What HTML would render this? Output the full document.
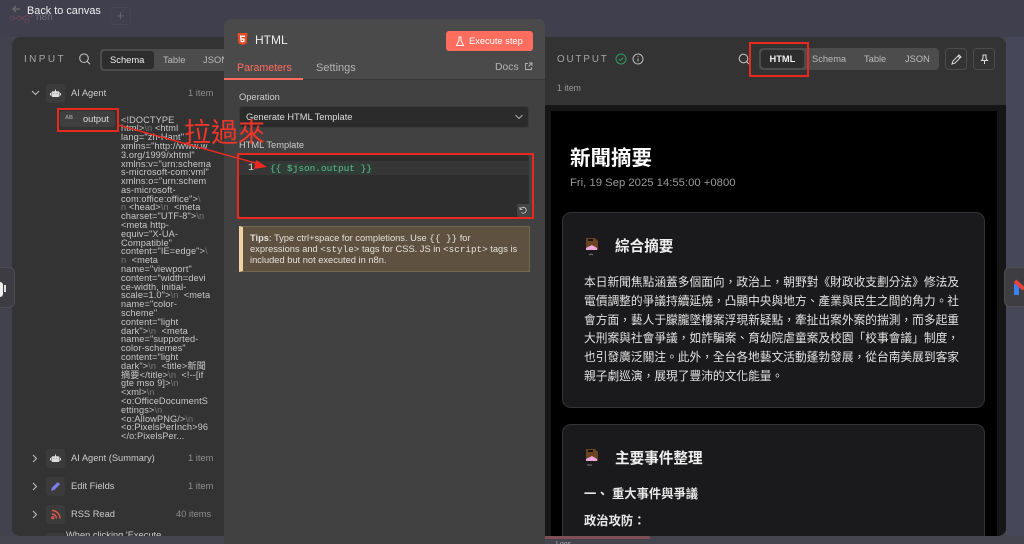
<!DOCTYPE html>
<html lang="zh-Hant">
<head>
<meta charset="utf-8">
<title>HTML node</title>
<style>
html,body{margin:0;padding:0;width:1024px;height:544px;overflow:hidden;background:#44444f;}
body{position:relative;font-family:"Liberation Sans","Noto Sans CJK TC",sans-serif;color:#ddd;}
.a{position:absolute;white-space:nowrap;}
.mono{font-family:"Liberation Mono","Noto Sans CJK TC",monospace;}
.l{position:absolute;left:121px;font-size:9.2px;letter-spacing:.12px;line-height:9px;color:#c9c9c9;white-space:nowrap;}
.l i{font-style:normal;color:#7a7a7a;}
.box{position:absolute;background:#3b3b3b;border-radius:3px;}
.red{position:absolute;border:2px solid #e8291f;box-sizing:border-box;}
.p{position:absolute;left:584px;font-size:11.72px;line-height:18px;color:#e2e2e2;white-space:nowrap;}
</style>
</head>
<body>
<!-- canvas top -->
<div class="a" style="left:0;top:0;width:1024px;height:37px;background:#3f3f4d;"></div>
<div class="a" style="left:1006px;top:37px;width:18px;height:507px;background:#47475a;"></div>
<div class="a" style="left:0;top:37px;width:12px;height:507px;background:#42424f;"></div>
<div class="a" style="left:0;top:536px;width:1024px;height:8px;background:#44444f;"></div>
<svg class="a" style="left:9px;top:3px" width="30" height="20" viewBox="0 0 30 20" fill="none"><path d="M11 6H4M7 3L4 6l3 3" stroke="#777" stroke-width="1"/><circle cx="3" cy="15" r="2" stroke="#6a4653"/><circle cx="10" cy="15" r="2" stroke="#6a4653"/><circle cx="18" cy="18" r="2" stroke="#6a4653"/><circle cx="21" cy="12" r="2" stroke="#6a4653"/><path d="M5 15h3M12 15l4 2M12 15l7-3" stroke="#6a4653"/></svg>
<div class="a" style="left:36px;top:11px;font-size:10px;line-height:13px;color:#6c6c78;">n8n</div>
<div class="a" style="left:27px;top:5px;font-size:10.9px;line-height:13px;color:#f0f0f0;">Back to canvas</div>
<div class="a" style="left:110px;top:7px;width:21px;height:18px;border:1px solid #474754;border-radius:4px;box-sizing:border-box;color:#666674;font-size:13px;line-height:16px;text-align:center;">+</div>

<!-- left panel -->
<div class="a" style="left:12px;top:37px;width:213px;height:499px;background:#333333;border-radius:8px 0 0 8px;overflow:hidden;"></div>
<div class="a" style="left:24px;top:53px;font-size:10px;line-height:13px;letter-spacing:2.4px;color:#a5a5a5;">INPUT</div>
<svg class="a" style="left:78px;top:52px" width="14" height="14" viewBox="0 0 14 14" fill="none" stroke="#bdbdbd" stroke-width="1.1"><circle cx="6" cy="6.2" r="4.3"/><path d="M9.2 9.4L12 12.2"/></svg>
<div class="a" style="left:100px;top:49px;width:125px;height:22px;background:#4c4c4c;border-radius:4px 0 0 4px;"></div>
<div class="a" style="left:102px;top:51px;width:52px;height:18px;background:#2d2d2d;border-radius:3px;"></div>
<div class="a" style="left:110px;top:53px;font-size:9.4px;line-height:13px;color:#eee;">Schema</div>
<div class="a" style="left:163px;top:53px;font-size:9.4px;line-height:13px;color:#bbb;">Table</div>
<div class="a" style="left:203px;top:53px;font-size:9.4px;line-height:13px;color:#bbb;">JSON</div>

<svg class="a" style="left:30px;top:88px" width="11" height="10" fill="none" stroke="#bbb" stroke-width="1.1"><path d="M2 3l3.5 3.5L9 3"/></svg>
<div class="box" style="left:46px;top:84px;width:19px;height:19px;"></div>
<svg class="a" style="left:50px;top:88px" width="11" height="11" viewBox="0 0 11 11"><rect x="1.5" y="3.2" width="8" height="5.8" rx="1.5" fill="#ddd"/><rect x="5" y="1.500" width="1" height="2" fill="#ddd"/><rect x="0" y="5" width="1" height="2.5" fill="#ddd"/><rect x="10" y="5" width="1" height="2.5" fill="#ddd"/><circle cx="4" cy="5.6" r=".5" fill="#666"/><circle cx="7" cy="5.6" r=".5" fill="#666"/></svg>
<div class="a" style="left:71px;top:87px;font-size:9.3px;line-height:13px;color:#ccc;">AI Agent</div>
<div class="a" style="left:188px;top:87px;font-size:9.3px;line-height:13px;color:#8f8f8f;">1 item</div>

<div class="a" style="left:60px;top:111px;width:55px;height:16px;background:#3f3f3f;border-radius:3px;"></div>
<div class="a" style="left:65px;top:115px;font-size:5.5px;line-height:7px;font-weight:bold;color:#999;">AB</div>
<div class="a" style="left:83px;top:113px;font-size:9.3px;line-height:13px;color:#ddd;">output</div>

<div class="l" style="top:115.5px">&lt;!DOCTYPE</div>
<div class="l" style="top:124.3px">html&gt;<i>\n</i> &lt;html</div>
<div class="l" style="top:133px">lang="zh-Hant"</div>
<div class="l" style="top:141.9px">xmlns="http://www.w</div>
<div class="l" style="top:150.7px">3.org/1999/xhtml"</div>
<div class="l" style="top:159.5px">xmlns:v="urn:schema</div>
<div class="l" style="top:168.2px">s-microsoft-com:vml"</div>
<div class="l" style="top:177px">xmlns:o="urn:schem</div>
<div class="l" style="top:185.8px">as-microsoft-</div>
<div class="l" style="top:194.6px">com:office:office"&gt;<i>\</i></div>
<div class="l" style="top:203.4px"><i>n</i> &lt;head&gt;<i>\n</i> &nbsp;&lt;meta</div>
<div class="l" style="top:212.2px">charset="UTF-8"&gt;<i>\n</i></div>
<div class="l" style="top:221px">&lt;meta http-</div>
<div class="l" style="top:229.8px">equiv="X-UA-</div>
<div class="l" style="top:238.6px">Compatible"</div>
<div class="l" style="top:247.4px">content="IE=edge"&gt;<i>\</i></div>
<div class="l" style="top:256.2px"><i>n</i> &nbsp;&lt;meta</div>
<div class="l" style="top:265px">name="viewport"</div>
<div class="l" style="top:273.8px">content="width=devi</div>
<div class="l" style="top:282.6px">ce-width, initial-</div>
<div class="l" style="top:291.4px">scale=1.0"&gt;<i>\n</i> &nbsp;&lt;meta</div>
<div class="l" style="top:300.2px">name="color-</div>
<div class="l" style="top:309px">scheme"</div>
<div class="l" style="top:317.8px">content="light</div>
<div class="l" style="top:326.6px">dark"&gt;<i>\n</i> &nbsp;&lt;meta</div>
<div class="l" style="top:335.4px">name="supported-</div>
<div class="l" style="top:344.2px">color-schemes"</div>
<div class="l" style="top:353px">content="light</div>
<div class="l" style="top:361.8px">dark"&gt;<i>\n</i> &nbsp;&lt;title&gt;新聞</div>
<div class="l" style="top:370.6px">摘要&lt;/title&gt;<i>\n</i> &nbsp;&lt;!--[if</div>
<div class="l" style="top:379.4px">gte mso 9]&gt;<i>\n</i></div>
<div class="l" style="top:388.2px">&lt;xml&gt;<i>\n</i></div>
<div class="l" style="top:397px">&lt;o:OfficeDocumentS</div>
<div class="l" style="top:405.8px">ettings&gt;<i>\n</i></div>
<div class="l" style="top:414.6px">&lt;o:AllowPNG/&gt;<i>\n</i></div>
<div class="l" style="top:423.4px">&lt;o:PixelsPerInch&gt;96</div>
<div class="l" style="top:432.2px">&lt;/o:PixelsPer...</div>

<svg class="a" style="left:30px;top:453px" width="10" height="11" fill="none" stroke="#bbb" stroke-width="1.1"><path d="M3 2l3.5 3.5L3 9"/></svg>
<div class="box" style="left:46px;top:449px;width:19px;height:19px;"></div>
<svg class="a" style="left:50px;top:453px" width="11" height="11" viewBox="0 0 11 11"><rect x="1.5" y="3.2" width="8" height="5.8" rx="1.5" fill="#ddd"/><rect x="5" y="1.500" width="1" height="2" fill="#ddd"/><rect x="0" y="5" width="1" height="2.5" fill="#ddd"/><rect x="10" y="5" width="1" height="2.5" fill="#ddd"/><circle cx="4" cy="5.6" r=".5" fill="#666"/><circle cx="7" cy="5.6" r=".5" fill="#666"/></svg>
<div class="a" style="left:71px;top:452px;font-size:9.3px;line-height:13px;color:#ccc;">AI Agent (Summary)</div>
<div class="a" style="left:188px;top:452px;font-size:9.3px;line-height:13px;color:#8f8f8f;">1 item</div>

<svg class="a" style="left:30px;top:481px" width="10" height="11" fill="none" stroke="#bbb" stroke-width="1.1"><path d="M3 2l3.5 3.5L3 9"/></svg>
<div class="box" style="left:46px;top:477px;width:19px;height:19px;"></div>
<svg class="a" style="left:50px;top:481px" width="11" height="11" viewBox="0 0 11 11"><path d="M1 10l1-3.4L7.8 1 10 3.2 4.3 9z" fill="#7c7fe8"/></svg>
<div class="a" style="left:71px;top:480px;font-size:9.3px;line-height:13px;color:#ccc;">Edit Fields</div>
<div class="a" style="left:188px;top:480px;font-size:9.3px;line-height:13px;color:#8f8f8f;">1 item</div>

<svg class="a" style="left:30px;top:509px" width="10" height="11" fill="none" stroke="#bbb" stroke-width="1.1"><path d="M3 2l3.5 3.5L3 9"/></svg>
<div class="box" style="left:46px;top:505px;width:19px;height:19px;"></div>
<svg class="a" style="left:50px;top:509px" width="11" height="11" viewBox="0 0 11 11" fill="none" stroke="#e2574c" stroke-width="1.4"><path d="M2 1.5a8 8 0 0 1 8 8M2 5a4.5 4.5 0 0 1 4.500 4.500"/><circle cx="2.800" cy="8.700" r=".9" fill="#e2574c"/></svg>
<div class="a" style="left:71px;top:508px;font-size:9.3px;line-height:13px;color:#ccc;">RSS Read</div>
<div class="a" style="left:176px;top:508px;font-size:9.3px;line-height:13px;color:#8f8f8f;">40 items</div>
<div class="a" style="left:12px;top:530px;width:213px;height:6px;overflow:hidden;"><div class="box" style="left:34px;top:3px;width:19px;height:19px;"></div><div class="a" style="left:54px;top:-1px;font-size:9.3px;line-height:13px;color:#ccc;">When clicking 'Execute</div></div>

<!-- middle panel -->
<div class="a" style="left:224px;top:19px;width:321px;height:525px;background:#414141;border-radius:7px 7px 0 0;"></div>
<div class="a" style="left:224px;top:19px;width:321px;height:60px;background:#4a4a4a;border-radius:7px 7px 0 0;"></div>
<div class="a" style="left:224px;top:79px;width:321px;height:1px;background:#383838;"></div>
<svg class="a" style="left:237px;top:32px" width="11" height="14" viewBox="0 0 11 14"><path d="M.5 1h10l-.9 10.500L5.500 13l-4.100-1.500z" fill="#e44d26"/><path d="M3 3.500h5l-.1 1.500H4.500l.1 1.500h3.200l-.3 3.200-2 .7-2-.7-.1-1.500h1.300l.1.700.7.200.7-.2.100-1.200H3.200z" fill="#fff"/></svg>
<div class="a" style="left:255px;top:33px;font-size:12px;line-height:15px;color:#eee;">HTML</div>
<div class="a" style="left:446px;top:31px;width:87px;height:20px;background:#ff6d5f;border-radius:3px;"></div>
<svg class="a" style="left:455px;top:36px" width="10" height="11" viewBox="0 0 10 11" fill="none" stroke="#fff" stroke-width=".9"><path d="M3.500 1h3M4 1v3.500L1.500 9.500h7L6 4.500V1"/></svg>
<div class="a" style="left:469px;top:35px;font-size:9.3px;line-height:13px;color:#fff;">Execute step</div>
<div class="a" style="left:237px;top:61px;font-size:10.6px;line-height:14px;color:#ff6d5f;">Parameters</div>
<div class="a" style="left:224px;top:78px;width:79px;height:1.500px;background:#ff6d5f;"></div>
<div class="a" style="left:316px;top:61px;font-size:11px;line-height:14px;color:#b3b3b3;">Settings</div>
<div class="a" style="left:495px;top:61px;font-size:10.4px;line-height:14px;color:#b3b3b3;">Docs</div>
<svg class="a" style="left:524px;top:62px" width="9" height="9" viewBox="0 0 9 9" fill="none" stroke="#b3b3b3" stroke-width=".9"><path d="M4 1.500H1.500v6h6V5M5 1h3v3M8 1L4.500 4.500"/></svg>
<div class="a" style="left:239px;top:91px;font-size:9.300px;line-height:13px;color:#ccc;">Operation</div>
<div class="a" style="left:239px;top:106px;width:290px;height:22px;background:#2b2b2b;border:1px solid #3a3a3a;box-sizing:border-box;border-radius:3px;"></div>
<div class="a" style="left:246px;top:111px;font-size:9.300px;line-height:13px;color:#ddd;">Generate HTML Template</div>
<svg class="a" style="left:514px;top:113px" width="10" height="8" fill="none" stroke="#aaa"><path d="M1.500 2l3.500 3.500L8.500 2"/></svg>
<div class="a" style="left:239px;top:139px;font-size:9.300px;line-height:13px;color:#ccc;">HTML Template</div>
<div class="a" style="left:239px;top:155px;width:290px;height:62px;background:#2d2d2d;border-radius:3px;"></div>
<div class="a" style="left:239px;top:161px;width:290px;height:14px;background:#363636;"></div>
<div class="a mono" style="left:248px;top:163px;font-size:10px;line-height:12px;color:#ddd;">1</div>
<div class="a mono" style="left:270px;top:163px;font-size:9.450px;line-height:11px;color:#5fbb8e;background:#2f3d36;">{{ $json.output }}</div>
<div class="a" style="left:517px;top:204px;width:13px;height:13px;background:#454545;border-radius:2px;"></div>
<svg class="a" style="left:519px;top:206px" width="9" height="9" viewBox="0 0 9 9" fill="none" stroke="#ccc" stroke-width=".8"><path d="M1.500 3a3 3 0 1 1 .8 3.500M1 1v2.500h2.500"/></svg>
<div class="a" style="left:239px;top:226px;width:291px;height:46px;background:#5e5140;border:1px solid #75664f;border-left:4px solid #f0d3a3;box-sizing:border-box;"></div>
<div class="a" style="left:250px;top:233px;font-size:9.300px;line-height:11px;color:#e4e0d8;white-space:nowrap;"><b>Tips</b>: Type ctrl+space for completions. Use <span class="mono">{{ }}</span> for<br>expressions and <span class="mono">&lt;style&gt;</span> tags for CSS. JS in <span class="mono">&lt;script&gt;</span> tags is<br>included but not executed in n8n.</div>

<!-- right panel -->
<div class="a" style="left:545px;top:37px;width:461px;height:499px;background:#333333;border-radius:0 8px 8px 0;overflow:hidden;">
  <div class="a" style="left:0;top:68px;width:461px;height:431px;background:#161616;"></div>
  <div class="a" style="left:6px;top:74px;width:446px;height:425px;background:#000;"></div>
</div>
<div class="a" style="left:557px;top:53px;font-size:9.800px;line-height:13px;letter-spacing:1.900px;color:#a5a5a5;">OUTPUT</div>
<svg class="a" style="left:615px;top:53px" width="12" height="12" viewBox="0 0 12 12" fill="none" stroke="#2f9e62" stroke-width="1"><circle cx="6" cy="6" r="5"/><path d="M3.800 6l1.600 1.600 2.800-2.800"/></svg>
<svg class="a" style="left:632px;top:53px" width="12" height="12" viewBox="0 0 12 12" fill="none" stroke="#bbb" stroke-width="1"><circle cx="6" cy="6" r="5"/><path d="M6 5.500v3M6 3.300v1"/></svg>
<div class="a" style="left:557px;top:82px;font-size:8.800px;line-height:12px;color:#999;">1 item</div>
<svg class="a" style="left:737px;top:52px" width="14" height="14" viewBox="0 0 14 14" fill="none" stroke="#bdbdbd" stroke-width="1.1"><circle cx="6.500" cy="6.500" r="4.300"/><path d="M9.700 9.700L12 12"/></svg>
<div class="a" style="left:759px;top:48px;width:180px;height:22px;background:#4c4c4c;border-radius:4px;"></div>
<div class="a" style="left:761px;top:50px;width:43px;height:18px;background:#2d2d2d;border-radius:3px;"></div>
<div class="a" style="left:769.500px;top:53px;font-size:9.300px;line-height:13px;font-weight:bold;color:#eee;">HTML</div>
<div class="a" style="left:812px;top:53px;font-size:9.300px;line-height:13px;color:#bbb;">Schema</div>
<div class="a" style="left:864px;top:53px;font-size:9.300px;line-height:13px;color:#bbb;">Table</div>
<div class="a" style="left:905px;top:53px;font-size:9.300px;line-height:13px;color:#bbb;">JSON</div>
<div class="a" style="left:945px;top:48px;width:22px;height:22px;border:1px solid #4c4c4c;border-radius:4px;box-sizing:border-box;"></div>
<svg class="a" style="left:951px;top:54px" width="11" height="11" viewBox="0 0 11 11" fill="none" stroke="#ddd" stroke-width="1"><path d="M1 10l.8-2.800L8 1l2 2-6.200 6.200zM7 2l2 2"/></svg>
<div class="a" style="left:973px;top:48px;width:22px;height:22px;border:1px solid #4c4c4c;border-radius:4px;box-sizing:border-box;"></div>
<svg class="a" style="left:979px;top:54px" width="11" height="11" viewBox="0 0 11 11" fill="none" stroke="#ddd" stroke-width="1"><path d="M3.500 1h4M4 1v3.500L2.500 6.500h6L7 4.500V1M5.500 6.500V10"/></svg>

<div class="a" style="left:570px;top:146px;font-size:20.500px;line-height:26px;font-weight:bold;color:#fff;">新聞摘要</div>
<div class="a" style="left:570px;top:176px;font-size:11.300px;line-height:14px;color:#9a9a9a;">Fri, 19 Sep 2025 14:55:00 +0800</div>

<!-- card 1 -->
<div class="a" style="left:562px;top:212px;width:423px;height:196px;background:#1a1a1c;border:1px solid #343436;border-radius:9px;box-sizing:border-box;"></div>
<svg class="a" style="left:586px;top:238px" width="13" height="18" viewBox="0 0 13 18"><path d="M0 0h9l3 3v9H0z" fill="#6b4423"/><path d="M0 10l6-3 5 3v2H0z" fill="#f0a8e0"/><rect x="2" y="1" width="5" height="2" fill="#111"/><path d="M3 17l2-1 2 1" stroke="#777" fill="none"/></svg>
<div class="a" style="left:615px;top:237px;font-size:14.600px;line-height:20px;font-weight:bold;color:#f0f0f0;">綜合摘要</div>
<div class="p" style="top:274px">本日新聞焦點涵蓋多個面向&#xFF0C;政治上&#xFF0C;朝野對《財政收支劃分法》修法及</div>
<div class="p" style="top:292.800px">電價調整的爭議持續延燒&#xFF0C;凸顯中央與地方、產業與民生之間的角力。社</div>
<div class="p" style="top:311.600px">會方面&#xFF0C;藝人于朦朧墜樓案浮現新疑點&#xFF0C;牽扯出案外案的揣測&#xFF0C;而多起重</div>
<div class="p" style="top:330.400px">大刑案與社會爭議&#xFF0C;如詐騙案、育幼院虐童案及校園「校事會議」制度&#xFF0C;</div>
<div class="p" style="top:349.200px">也引發廣泛關注。此外&#xFF0C;全台各地藝文活動蓬勃發展&#xFF0C;從台南美展到客家</div>
<div class="p" style="top:368px">親子劇巡演&#xFF0C;展現了豐沛的文化能量。</div>

<!-- card 2 -->
<div class="a" style="left:562px;top:424px;width:423px;height:112px;background:#1a1a1c;border:1px solid #343436;border-bottom:0;border-radius:9px 9px 0 0;box-sizing:border-box;"></div>
<svg class="a" style="left:586px;top:449px" width="13" height="18" viewBox="0 0 13 18"><path d="M0 0h9l3 3v9H0z" fill="#6b4423"/><path d="M0 10l6-3 5 3v2H0z" fill="#f0a8e0"/><rect x="2" y="1" width="5" height="2" fill="#111"/><path d="M1 16h5" stroke="#777" fill="none"/></svg>
<div class="a" style="left:615px;top:449px;font-size:14.600px;line-height:20px;font-weight:bold;color:#f0f0f0;">主要事件整理</div>
<div class="a" style="left:584px;top:486px;font-size:12.300px;line-height:16px;font-weight:bold;color:#e8e8e8;">一、 重大事件與爭議</div>
<div class="a" style="left:584px;top:513px;font-size:12.300px;line-height:16px;font-weight:bold;color:#e8e8e8;">政治攻防&#xFF1A;</div>
<div class="a" style="left:545px;top:536px;width:105px;height:3px;background:#7d5058;"></div>
<div class="a" style="left:556px;top:541px;font-size:7px;line-height:8px;color:#aaa;height:3px;overflow:hidden;">Logs</div>

<!-- side handles -->
<div class="a" style="left:0;top:267px;width:15px;height:41px;background:#3c3c42;border:1px solid #4c4c52;border-left:0;border-radius:0 6px 6px 0;box-sizing:border-box;"></div>
<div class="a" style="left:0;top:282px;width:3px;height:15px;background:#eee;border-radius:0 3px 3px 0;"></div>
<div class="a" style="left:4px;top:285px;width:2px;height:7px;background:#ddd;"></div>
<div class="a" style="left:1004px;top:267px;width:20px;height:40px;background:#3d3d42;border:1px solid #4c4c52;border-right:0;border-radius:6px 0 0 6px;box-sizing:border-box;"></div>
<div class="a" style="left:1014px;top:284px;width:5px;height:11px;background:#3b82f0;"></div>
<svg class="a" style="left:1013px;top:278px" width="11" height="14" viewBox="0 0 11 14"><path d="M2 3l9 8" stroke="#e8413a" stroke-width="4"/></svg>

<!-- annotations -->
<div class="red" style="left:57px;top:108px;width:62px;height:24px;"></div>
<div class="red" style="left:237px;top:153px;width:297px;height:66px;"></div>
<div class="red" style="left:749px;top:42px;width:60px;height:35px;"></div>
<div class="a" style="left:184px;top:114px;font-size:27px;line-height:34px;color:#f0352a;font-family:'Noto Sans CJK TC','WenQuanYi Zen Hei',sans-serif;font-weight:400;">拉過來</div>
<svg class="a" style="left:0;top:0" width="1024" height="544" viewBox="0 0 1024 544"><path d="M118 125L259 164" stroke="#ec2a20" stroke-width="1.400"/><path d="M267 167L256 160l-2 9z" fill="#ec2a20"/></svg>
</body>
</html>
